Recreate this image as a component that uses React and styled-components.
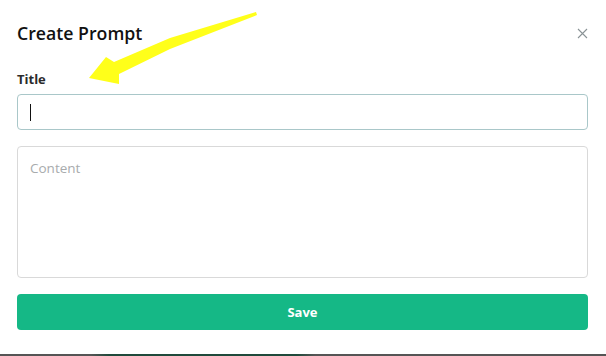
import React from "react";
import styled, { createGlobalStyle } from "styled-components";

const Global = createGlobalStyle`
  html, body { margin: 0; padding: 0; background: #fff; }
  body { font-family: "Open Sans", "Noto Sans", sans-serif; }
  * { box-sizing: border-box; }
`;

const Page = styled.div`
  position: relative;
  width: 606px;
  height: 356px;
  display: flex;
  flex-direction: column;
  background: #fff;
  overflow: hidden;
`;

const Modal = styled.div`
  flex: 1;
  display: flex;
  flex-direction: column;
  padding: 20px 18px 0 17px;
`;

const Header = styled.div`
  display: flex;
  align-items: center;
  justify-content: space-between;
  height: 26px;
`;

const Heading = styled.h2`
  margin: 0;
  font-size: 17.7px;
  font-weight: 600;
  color: #111;
`;

const CloseButton = styled.button`
  border: 0;
  background: none;
  padding: 0;
  width: 14px;
  height: 14px;
  margin-right: -1px;
  display: flex;
  align-items: center;
  justify-content: center;
  color: #8a9396;
  cursor: pointer;
`;

const Label = styled.label`
  margin-top: 25px;
  font-size: 13px;
  font-weight: 700;
  color: #2b2b2b;
  line-height: 17px;
`;

const TitleInput = styled.div`
  margin-top: 6px;
  height: 36px;
  border: 1px solid ${(p) => (p.$focused ? "#a9c7c9" : "#d9d9d9")};
  border-radius: 4px;
  display: flex;
  align-items: center;
  padding-left: 12px;
`;

const Caret = styled.span`
  width: 1px;
  height: 17px;
  background: #111;
`;

const ContentArea = styled.div`
  margin-top: 16px;
  height: 132px;
  border: 1px solid #d9d9d9;
  border-radius: 4px;
  padding: 12px 12px;
  font-size: 13.5px;
  color: #a8abad;
  line-height: 18px;
`;

const SaveButton = styled.button`
  margin-top: 16px;
  height: 36px;
  border: 0;
  border-radius: 4px;
  background: #15b886;
  color: #fff;
  font-family: "Open Sans", "Noto Sans", sans-serif;
  font-size: 13px;
  font-weight: 700;
`;

const BottomStrip = styled.div`
  height: 2px;
  background: linear-gradient(
    90deg,
    #555 0%,
    #555 15%,
    #1f4a3b 18%,
    #1f4a3b 49%,
    #555 52%,
    #555 100%
  );
`;

const Annotation = styled.svg`
  position: absolute;
  left: 0;
  top: 0;
  pointer-events: none;
`;

export default function App() {
  return (
    <Page>
      <Global />
      <Modal>
        <Header>
          <Heading>Create Prompt</Heading>
          <CloseButton aria-label="close">
            <svg width="11" height="11" viewBox="0 0 11 11">
              <path d="M1 1L10 10M10 1L1 10" stroke="currentColor" strokeWidth="1.1" />
            </svg>
          </CloseButton>
        </Header>
        <Label>Title</Label>
        <TitleInput $focused>
          <Caret />
        </TitleInput>
        <ContentArea>Content</ContentArea>
        <SaveButton>Save</SaveButton>
      </Modal>
      <BottomStrip />
      <Annotation width="606" height="356" viewBox="0 0 606 356">
        <polygon
          points="256,12 170,38 114,62 106,57 89,78 119,84 119,74 170,49 257,15"
          fill="#ffff1a"
        />
      </Annotation>
    </Page>
  );
}
